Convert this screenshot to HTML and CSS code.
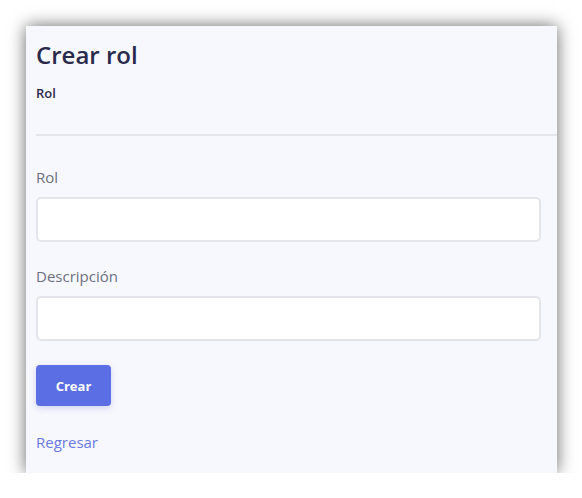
FILE: index.html
```html
<!DOCTYPE html>
<html lang="es">
<head>
<meta charset="utf-8">
<title>Crear rol</title>
<link rel="stylesheet" href="styles.css">
</head>
<body>
<div class="panel">
  <header class="head">
    <h1 class="title">Crear rol</h1>
    <div class="crumb">Rol</div>
  </header>
  <hr class="divider">
  <form class="form">
    <label class="field">
      <span class="label">Rol</span>
      <input class="input" type="text">
    </label>
    <label class="field">
      <span class="label">Descripción</span>
      <input class="input" type="text">
    </label>
    <div class="actions">
      <button class="btn" type="button">Crear</button>
    </div>
    <a class="back" href="#">Regresar</a>
  </form>
</div>
</body>
</html>
```
FILE: styles.css
```css
* { box-sizing: border-box; }
html, body { margin: 0; padding: 0; background: #ffffff; }
body {
  font-family: "Open Sans", "Liberation Sans", sans-serif;
  padding: 26px 0 0 26px;
}
.panel {
  width: 531px;
  height: 447px;
  background: #f7f8fd;
  box-shadow: 0 0 16px rgba(0, 0, 0, 0.6);
  padding: 12px 0 0 10px;
}
.head { padding-right: 10px; }
.title {
  margin: 0;
  font-size: 24px;
  font-weight: 600;
  line-height: 34px;
  color: #2a2a4c;
}
.crumb {
  margin-top: 12px;
  font-size: 13px;
  font-weight: 600;
  line-height: 18px;
  color: #2a2a4c;
}
.divider {
  margin: 32px 0 0 0;
  border: 0;
  border-top: 2px solid #e4e5ec;
}
.form {
  padding: 31px 16px 0 0;
  display: flex;
  flex-direction: column;
}
.field { display: flex; flex-direction: column; margin-bottom: 24px; }
.label {
  font-size: 15px;
  line-height: 20px;
  color: #6b6f80;
  margin-bottom: 10px;
}
.input {
  height: 45px;
  border: 2px solid #e3e5eb;
  border-radius: 5px;
  background: #ffffff;
  font: inherit;
}
.actions { display: flex; }
.btn {
  width: 75px;
  height: 41px;
  border: 0;
  border-radius: 4px;
  background: #5b6ee4;
  color: #ffffff;
  font-family: inherit;
  font-size: 13px;
  font-weight: 700;
  box-shadow: 0 2px 6px rgba(90, 100, 200, 0.25);
}
.back {
  margin-top: 26px;
  font-size: 15px;
  line-height: 20px;
  color: #6a78e4;
  text-decoration: none;
  align-self: flex-start;
}
```
